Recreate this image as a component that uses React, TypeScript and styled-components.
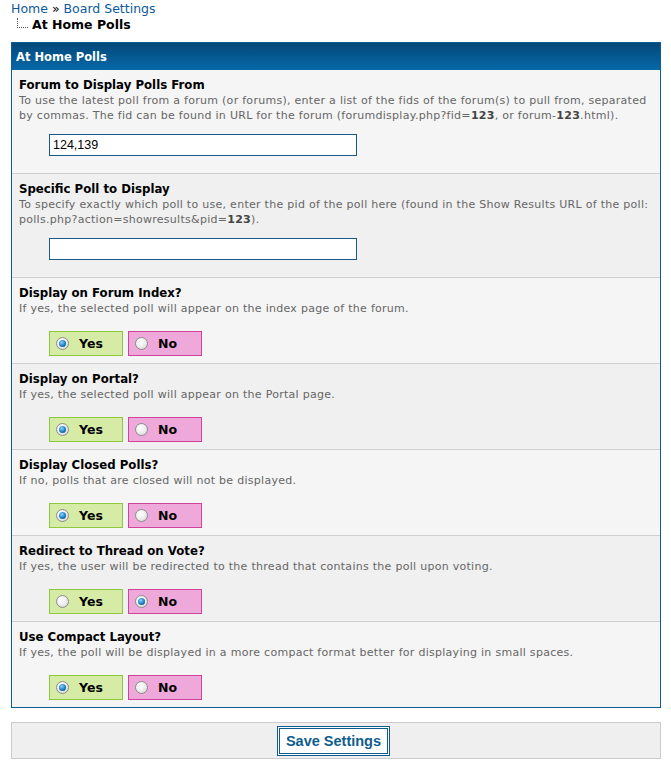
import * as React from "react";
import styled, { createGlobalStyle, css } from "styled-components";

const GlobalStyle = createGlobalStyle`
  html, body {
    margin: 0;
    padding: 0;
    background: #fff;
  }
  body {
    font-family: "DejaVu Sans", Verdana, sans-serif;
    color: #000;
  }
`;

const Page = styled.div`
  padding: 0 10px 8px 11px;
`;

const Breadcrumb = styled.div`
  font-size: 12.5px;
  line-height: 16px;
  padding-top: 1px;
`;
const Crumb = styled.a`
  color: #0b5a9a;
  text-decoration: none;
`;
const Current = styled.div`
  display: flex;
  align-items: flex-start;
  font-weight: bold;
`;
const TreeLine = styled.span`
  display: inline-block;
  width: 10px;
  height: 9px;
  margin: 1px 4px 0 6px;
  border-left: 1px dotted #555;
  border-bottom: 1px dotted #555;
`;

const Panel = styled.div`
  margin-top: 9px;
  border: 1px solid #0f5c8e;
`;
const PanelHeader = styled.div`
  height: 27px;
  display: flex;
  align-items: center;
  padding: 0 4px;
  background: linear-gradient(#02487a, #0868a8);
  color: #fff;
  font-size: 11.5px;
  font-weight: bold;
`;

const Row = styled.div<{ alt: boolean }>`
  padding: 8px 7px 7px 7px;
  background: ${p => (p.alt ? "#f0f0f0" : "#f5f5f5")};
  & + & {
    border-top: 1px solid #cfcfcf;
  }
`;
const Title = styled.div`
  font-size: 11.75px;
  font-weight: bold;
  line-height: 15px;
`;
const Description = styled.div`
  font-size: 11px;
  letter-spacing: 0.28px;
  line-height: 15px;
  color: #666;

  b {
    color: #444;
  }
`;
const FieldWrap = styled.div<{ kind: "text" | "radio" }>`
  padding-left: 30px;
  ${p =>
    p.kind === "text"
      ? css`
          margin: 11px 0 10px;
        `
      : css`
          margin-top: 15px;
        `}
`;
const TextInput = styled.input`
  display: block;
  box-sizing: border-box;
  width: 308px;
  height: 22px;
  margin: 0;
  padding: 0 3px;
  border: 1px solid #175a8a;
  background: #fff;
  font-family: "Liberation Sans", Arial, sans-serif;
  font-size: 12.5px;
  color: #000;
  outline: none;
`;

const RadioGroup = styled.div`
  display: flex;
  gap: 5px;
`;
const RadioLabel = styled.label<{ variant: "yes" | "no" }>`
  box-sizing: border-box;
  display: flex;
  align-items: center;
  width: 74px;
  height: 25px;
  padding-left: 6px;
  font-size: 12.5px;
  font-weight: bold;
  cursor: pointer;
  ${p =>
    p.variant === "yes"
      ? css`
          background: #d6eca6;
          border: 1px solid #8dc93e;
        `
      : css`
          background: #eea8d9;
          border: 1px solid #d0439a;
        `}
`;
const RadioDot = styled.span<{ checked: boolean }>`
  position: relative;
  width: 13px;
  height: 13px;
  margin-right: 10px;
  box-sizing: border-box;
  border-radius: 50%;
  border: 1px solid #8c8c8c;
  background: radial-gradient(circle at 40% 35%, #fff 0%, #f0f0f0 45%, #cfcfcf 100%);
  ${p =>
    p.checked &&
    css`
      &::after {
        content: "";
        position: absolute;
        left: 2px;
        top: 2px;
        width: 7px;
        height: 7px;
        border-radius: 50%;
        background: radial-gradient(circle at 40% 35%, #8fd3ff 0%, #1b7cc0 55%, #0a3f6a 100%);
      }
    `}
`;

const SaveBar = styled.div`
  margin-top: 14px;
  height: 35px;
  display: flex;
  align-items: center;
  justify-content: center;
  background: #efefef;
  border: 1px solid #ccc;
`;
const SaveButton = styled.button`
  box-sizing: border-box;
  width: 113px;
  height: 30px;
  margin-right: 5px;
  padding: 0;
  background: #fff;
  border: 3px double #0f5c8e;
  color: #0f5c8e;
  font-family: "Liberation Sans", Arial, sans-serif;
  font-size: 14.5px;
  font-weight: bold;
  cursor: pointer;
`;

type Setting =
  | { title: string; description: React.ReactNode; kind: "text"; value: string }
  | { title: string; description: React.ReactNode; kind: "yesno"; value: boolean };

const settings: Setting[] = [
  {
    title: "Forum to Display Polls From",
    description: (
      <>
        To use the latest poll from a forum (or forums), enter a list of the fids of the forum(s) to pull from,
        separated by commas. The fid can be found in URL for the forum (forumdisplay.php?fid=<b>123</b>, or forum-
        <b>123</b>.html).
      </>
    ),
    kind: "text",
    value: "124,139"
  },
  {
    title: "Specific Poll to Display",
    description: (
      <>
        To specify exactly which poll to use, enter the pid of the poll here (found in the Show Results URL of the
        poll: polls.php?action=showresults&amp;pid=<b>123</b>).
      </>
    ),
    kind: "text",
    value: ""
  },
  {
    title: "Display on Forum Index?",
    description: "If yes, the selected poll will appear on the index page of the forum.",
    kind: "yesno",
    value: true
  },
  {
    title: "Display on Portal?",
    description: "If yes, the selected poll will appear on the Portal page.",
    kind: "yesno",
    value: true
  },
  {
    title: "Display Closed Polls?",
    description: "If no, polls that are closed will not be displayed.",
    kind: "yesno",
    value: true
  },
  {
    title: "Redirect to Thread on Vote?",
    description: "If yes, the user will be redirected to the thread that contains the poll upon voting.",
    kind: "yesno",
    value: false
  },
  {
    title: "Use Compact Layout?",
    description: "If yes, the poll will be displayed in a more compact format better for displaying in small spaces.",
    kind: "yesno",
    value: true
  }
];

function YesNo(props: { value: boolean }) {
  return (
    <RadioGroup>
      <RadioLabel variant="yes">
        <RadioDot checked={props.value} />
        Yes
      </RadioLabel>
      <RadioLabel variant="no">
        <RadioDot checked={!props.value} />
        No
      </RadioLabel>
    </RadioGroup>
  );
}

export default function App() {
  return (
    <Page>
      <GlobalStyle />
      <Breadcrumb>
        <div>
          <Crumb href="#">Home</Crumb> &raquo; <Crumb href="#">Board Settings</Crumb>
        </div>
        <Current>
          <TreeLine />
          At Home Polls
        </Current>
      </Breadcrumb>
      <Panel>
        <PanelHeader>At Home Polls</PanelHeader>
        {settings.map((s, i) => (
          <Row key={s.title} alt={i % 2 === 1}>
            <Title>{s.title}</Title>
            <Description>{s.description}</Description>
            {s.kind === "text" ? (
              <FieldWrap kind="text">
                <TextInput type="text" defaultValue={s.value} />
              </FieldWrap>
            ) : (
              <FieldWrap kind="radio">
                <YesNo value={s.value} />
              </FieldWrap>
            )}
          </Row>
        ))}
      </Panel>
      <SaveBar>
        <SaveButton type="button">Save Settings</SaveButton>
      </SaveBar>
    </Page>
  );
}
